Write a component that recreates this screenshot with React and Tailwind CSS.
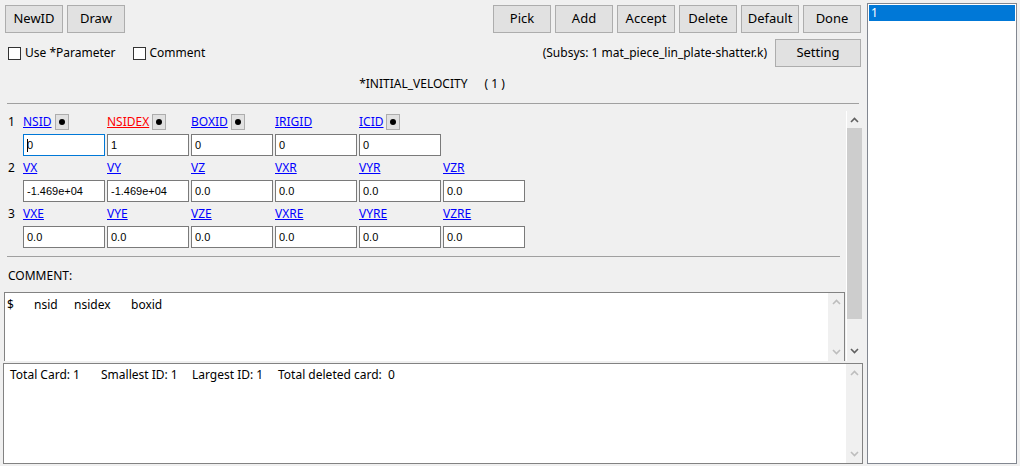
import React from 'react';

const Btn = ({ label, className = '' }) => (
  <button className={`h-[28px] bg-[#e1e1e1] border border-[#adadad] text-[13px] text-black ${className}`}>
    {label}
  </button>
);

const DotBtn = () => (
  <span className="ml-[3px] w-[14px] h-[16px] bg-[#e1e1e1] border border-[#adadad] flex items-center justify-center">
    <span className="w-[6px] h-[6px] rounded-full bg-black" />
  </span>
);

const Check = ({ label }) => (
  <label className="flex items-center gap-[4px]">
    <span className="w-[13px] h-[13px] border border-[#333] bg-white" />
    <span>{label}</span>
  </label>
);

const Field = ({ value, focused }) => (
  <div
    className={`w-[82px] h-[22px] bg-white border flex items-center pl-[3px] text-[11px] font-['Liberation_Sans',sans-serif] ${
      focused ? 'border-[#0078d7]' : 'border-[#7a7a7a]'
    }`}
  >
    {focused && <span className="w-px h-[13px] bg-black -mr-px" />}
    {value}
  </div>
);

const rows = [
  {
    n: 1,
    cols: [
      { name: 'NSID', dot: true, value: '0', focused: true },
      { name: 'NSIDEX', dot: true, red: true, value: '1' },
      { name: 'BOXID', dot: true, value: '0' },
      { name: 'IRIGID', value: '0' },
      { name: 'ICID', dot: true, value: '0' },
    ],
  },
  {
    n: 2,
    cols: [
      { name: 'VX', value: '-1.469e+04' },
      { name: 'VY', value: '-1.469e+04' },
      { name: 'VZ', value: '0.0' },
      { name: 'VXR', value: '0.0' },
      { name: 'VYR', value: '0.0' },
      { name: 'VZR', value: '0.0' },
    ],
  },
  {
    n: 3,
    cols: [
      { name: 'VXE', value: '0.0' },
      { name: 'VYE', value: '0.0' },
      { name: 'VZE', value: '0.0' },
      { name: 'VXRE', value: '0.0' },
      { name: 'VYRE', value: '0.0' },
      { name: 'VZRE', value: '0.0' },
    ],
  },
];

const Up = ({ light }) => (
  <svg width="9" height="6" viewBox="0 0 9 6">
    <path d="M1 5 L4.5 1.5 L8 5" fill="none" stroke={light ? '#bdbdbd' : '#606060'} strokeWidth="1.6" />
  </svg>
);
const Down = ({ light }) => (
  <svg width="9" height="6" viewBox="0 0 9 6">
    <path d="M1 1 L4.5 4.5 L8 1" fill="none" stroke={light ? '#bdbdbd' : '#606060'} strokeWidth="1.6" />
  </svg>
);

const InnerScroll = () => (
  <div className="w-[16px] h-full bg-[#f0f0f0] flex flex-col items-center justify-between py-[6px]">
    <Up light />
    <Down light />
  </div>
);

export default function App() {
  return (
    <div className="w-[1020px] h-[466px] bg-[#f0f0f0] flex font-['Noto_Sans','Liberation_Sans',sans-serif] text-[12px] text-black overflow-hidden">
      <div className="w-[867px] flex flex-col">
        {/* toolbar */}
        <div className="flex mt-[5px] pl-[5px] pr-[6px]">
          <Btn label="NewID" className="w-[58px]" />
          <Btn label="Draw" className="w-[58px] ml-[4px]" />
          <div className="ml-auto flex gap-[4px]">
            <Btn label="Pick" className="w-[58px]" />
            <Btn label="Add" className="w-[58px]" />
            <Btn label="Accept" className="w-[58px]" />
            <Btn label="Delete" className="w-[58px]" />
            <Btn label="Default" className="w-[58px]" />
            <Btn label="Done" className="w-[58px]" />
          </div>
        </div>

        {/* options */}
        <div className="flex items-center mt-[6px] h-[28px] pl-[8px] pr-[6px]">
          <Check label="Use *Parameter" />
          <div className="ml-[17px]">
            <Check label="Comment" />
          </div>
          <span className="ml-auto mr-[8px]">(Subsys: 1 mat_piece_lin_plate-shatter.k)</span>
          <Btn label="Setting" className="w-[86px]" />
        </div>

        {/* title */}
        <div className="h-[33px] flex items-center justify-center pr-[3px]">
          *INITIAL_VELOCITY<span className="ml-[17px]">( 1 )</span>
        </div>
        <div className="ml-[7px] w-[852px] h-px bg-[#a0a0a0] mt-[3px]" />

        {/* scroll region */}
        <div className="flex h-[250px] mt-[7px]">
          <div className="w-[846px] flex flex-col">
            <div className="flex flex-col pt-[3px] pl-[8px]">
              {rows.map((r) => (
                <div key={r.n} className="flex flex-col mb-[4px]">
                  <div className="flex h-[16px] items-center">
                    <span className="w-[15px]">{r.n}</span>
                    <div className="flex gap-[2px]">
                      {r.cols.map((c) => (
                        <div key={c.name} className="w-[82px] flex items-center">
                          <span className={`underline ${c.red ? 'text-[#ff0000]' : 'text-[#0000ff]'}`}>{c.name}</span>
                          {c.dot && <DotBtn />}
                        </div>
                      ))}
                    </div>
                  </div>
                  <div className="flex gap-[2px] ml-[15px] mt-[4px]">
                    {r.cols.map((c) => (
                      <Field key={c.name} value={c.value} focused={c.focused} />
                    ))}
                  </div>
                </div>
              ))}
            </div>
            <div className="ml-[7px] w-[833px] h-px bg-[#a0a0a0] mt-[4px]" />
            <div className="pl-[8px] h-[35px] flex items-center pt-[3px]">COMMENT:</div>
            <div className="ml-[4px] w-[841px] flex-1 bg-white border border-[#828282] border-b-0 flex">
              <div className="flex-1 flex pl-[2px] pt-[3px] h-[22px]">
                <span className="w-[27px]">$</span>
                <span className="w-[40px]">nsid</span>
                <span className="w-[57px]">nsidex</span>
                <span>boxid</span>
              </div>
              <InnerScroll />
            </div>
          </div>
          <div className="w-[16px] flex flex-col bg-[#f0f0f0] border-l border-white">
            <div className="h-[17px] flex items-center justify-center">
              <Up />
            </div>
            <div className="h-[191px] bg-[#cdcdcd]" />
            <div className="flex-1 flex items-end justify-center pb-[7px]">
              <Down />
            </div>
          </div>
        </div>

        {/* log */}
        <div className="ml-[3px] mt-[2px] w-[860px] h-[101px] bg-white border border-[#828282] flex">
          <div className="flex-1 flex pl-[6px] pt-[2px] h-[20px]">
            <span className="w-[91px]">Total Card: 1</span>
            <span className="w-[91px]">Smallest ID: 1</span>
            <span className="w-[86px]">Largest ID: 1</span>
            <span className="whitespace-pre">Total deleted card:  0</span>
          </div>
          <InnerScroll />
        </div>
      </div>

      {/* right list */}
      <div className="w-[150px] h-[461px] mt-[3px] bg-white border border-[#828790] p-px">
        <div className="h-[16px] bg-[#0078d7] text-white pl-[2px] leading-[16px]">1</div>
      </div>
    </div>
  );
}
